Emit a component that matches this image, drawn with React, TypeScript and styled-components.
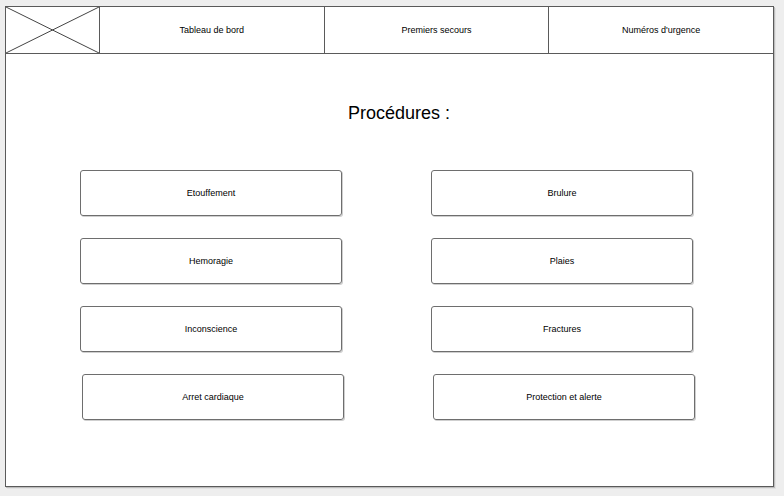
import { styled, createGlobalStyle } from "styled-components";

const GlobalStyle = createGlobalStyle`
  html, body {
    margin: 0;
    padding: 0;
    background: #eeeeee;
  }
  body {
    font-family: "Liberation Sans", Arial, sans-serif;
    color: #000;
  }
`;

const Page = styled.div`
  width: 784px;
  height: 496px;
  padding: 6px 0 0 5px;
  box-sizing: border-box;
`;

const Frame = styled.div`
  width: 769px;
  height: 481px;
  box-sizing: border-box;
  background: #fff;
  border: 1px solid #5a5a5a;
  box-shadow: 1px 1px 0 #bdbdbd, 2px 2px 0 #e2e2e2;
  display: flex;
  flex-direction: column;
`;

const Header = styled.div`
  display: flex;
  height: 47px;
  box-sizing: border-box;
  border-bottom: 1px solid #5a5a5a;
`;

const Logo = styled.div`
  width: 93px;
  flex: none;
  display: flex;
`;

const NavItem = styled.div`
  flex: 1;
  display: flex;
  align-items: center;
  justify-content: center;
  border-left: 1px solid #5a5a5a;
  font-size: 9px;
`;

const Content = styled.div`
  flex: 1;
  display: flex;
  flex-direction: column;
  align-items: center;
`;

const Title = styled.h1`
  margin: 48px 0 0;
  font-size: 18px;
  font-weight: normal;
  line-height: 22px;
  padding-left: 19px;
`;

const Grid = styled.div`
  margin-top: 46px;
  display: flex;
  flex-direction: column;
  gap: 22px;
  align-self: flex-start;
  margin-left: 74px;
`;

const Row = styled.div<{ $shift?: number }>`
  display: flex;
  gap: 89px;
  margin-left: ${(p) => p.$shift ?? 0}px;
`;

const Card = styled.div`
  width: 262px;
  height: 46px;
  box-sizing: border-box;
  border: 1px solid #6e6e6e;
  border-radius: 3px;
  box-shadow: 1px 1px 0 #cfcfcf;
  display: flex;
  align-items: center;
  justify-content: center;
  font-size: 9px;
`;

const rows: [string, string][] = [
  ["Etouffement", "Brulure"],
  ["Hemoragie", "Plaies"],
  ["Inconscience", "Fractures"],
  ["Arret cardiaque", "Protection et alerte"],
];

export default function App() {
  return (
    <Page>
      <GlobalStyle />
      <Frame>
        <Header>
          <Logo>
            <svg width="93" height="46" viewBox="0 0 93 46">
              <line x1="0" y1="0" x2="93" y2="46" stroke="#444" strokeWidth="1" />
              <line x1="0" y1="46" x2="93" y2="0" stroke="#444" strokeWidth="1" />
            </svg>
          </Logo>
          <NavItem>Tableau de bord</NavItem>
          <NavItem>Premiers secours</NavItem>
          <NavItem>Numéros d'urgence</NavItem>
        </Header>
        <Content>
          <Title>Procédures :</Title>
          <Grid>
            {rows.map((r, i) => (
              <Row key={i} $shift={i === 3 ? 2 : 0}>
                <Card>{r[0]}</Card>
                <Card>{r[1]}</Card>
              </Row>
            ))}
          </Grid>
        </Content>
      </Frame>
    </Page>
  );
}
